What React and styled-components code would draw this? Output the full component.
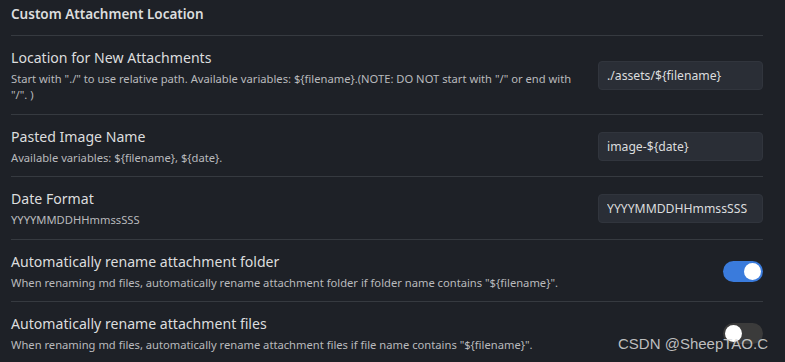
import styled, { createGlobalStyle } from "styled-components"

const GlobalStyle = createGlobalStyle`
    html, body{
        margin: 0;
        padding: 0;
        background-color: #1e2127;
        font-family: "Noto Sans", "Open Sans", sans-serif;
    }
`

const settings = [
    {
        name: 'Location for New Attachments',
        desc: 'Start with "./" to use relative path. Available variables: ${filename}.(NOTE: DO NOT start with "/" or end with "/". )',
        input: './assets/${filename}'
    },
    {
        name: 'Pasted Image Name',
        desc: 'Available variables: ${filename}, ${date}.',
        input: 'image-${date}'
    },
    {
        name: 'Date Format',
        desc: 'YYYYMMDDHHmmssSSS',
        input: 'YYYYMMDDHHmmssSSS'
    },
    {
        name: 'Automatically rename attachment folder',
        desc: 'When renaming md files, automatically rename attachment folder if folder name contains "${filename}".',
        toggle: true
    },
    {
        name: 'Automatically rename attachment files',
        desc: 'When renaming md files, automatically rename attachment files if file name contains "${filename}".',
        toggle: false
    }
]

export default function App(){
    return(
        <>
            <GlobalStyle/>
            <Page>
                <Heading>Custom Attachment Location</Heading>
                {settings.map((s, index) => (
                    <Row key={index}>
                        <Info>
                            <Name>{s.name}</Name>
                            <Desc>{s.desc}</Desc>
                        </Info>
                        {s.input !== undefined ? (
                            <TextInput defaultValue={s.input}/>
                        ) : (
                            <Toggle $on={s.toggle}><Knob $on={s.toggle}/></Toggle>
                        )}
                    </Row>
                ))}
            </Page>
            <Watermark>CSDN @SheepTAO.C</Watermark>
        </>
    )
}

const Page = styled.main`
    width: 752px;
    padding-left: 11px;
    height: 362px;
    overflow: hidden;
`
const Heading = styled.div`
    padding: 4px 0 11px 0;
    line-height: 20px;
    font-size: 13.5px;
    font-weight: 600;
    color: #dcddde;
`
const Row = styled.div`
    display: flex;
    align-items: center;
    border-top: 1px solid #363a40;
    padding: 12px 0 10.5px 0;
`
const Info = styled.div`
    flex: 1;
    margin-right: 22px;
`
const Name = styled.div`
    font-size: 14.1px;
    line-height: 20px;
    color: #dcddde;
    margin-bottom: 3px;
`
const Desc = styled.div`
    font-size: 11.2px;
    line-height: 16px;
    color: #b9babd;
`
const TextInput = styled.input`
    box-sizing: border-box;
    width: 165px;
    height: 29px;
    background-color: #2a2e36;
    border: 1px solid #31353d;
    border-radius: 4px;
    padding: 0 8px;
    font-family: inherit;
    font-size: 12.2px;
    color: #dcddde;
    outline: none;
`
const Toggle = styled.div`
    position: relative;
    width: 40px;
    height: 21px;
    border-radius: 11px;
    background-color: ${props => props.$on ? '#3a7bdc' : '#3b3b3b'};
    flex-shrink: 0;
`
const Knob = styled.div`
    position: absolute;
    top: 2px;
    left: ${props => props.$on ? '21px' : '2px'};
    width: 17px;
    height: 17px;
    border-radius: 50%;
    background-color: #ffffff;
`
const Watermark = styled.div`
    position: absolute;
    right: 17px;
    bottom: 10px;
    font-family: "Liberation Sans", Arial, sans-serif;
    font-size: 15px;
    color: rgba(220, 220, 220, 0.85);
`
